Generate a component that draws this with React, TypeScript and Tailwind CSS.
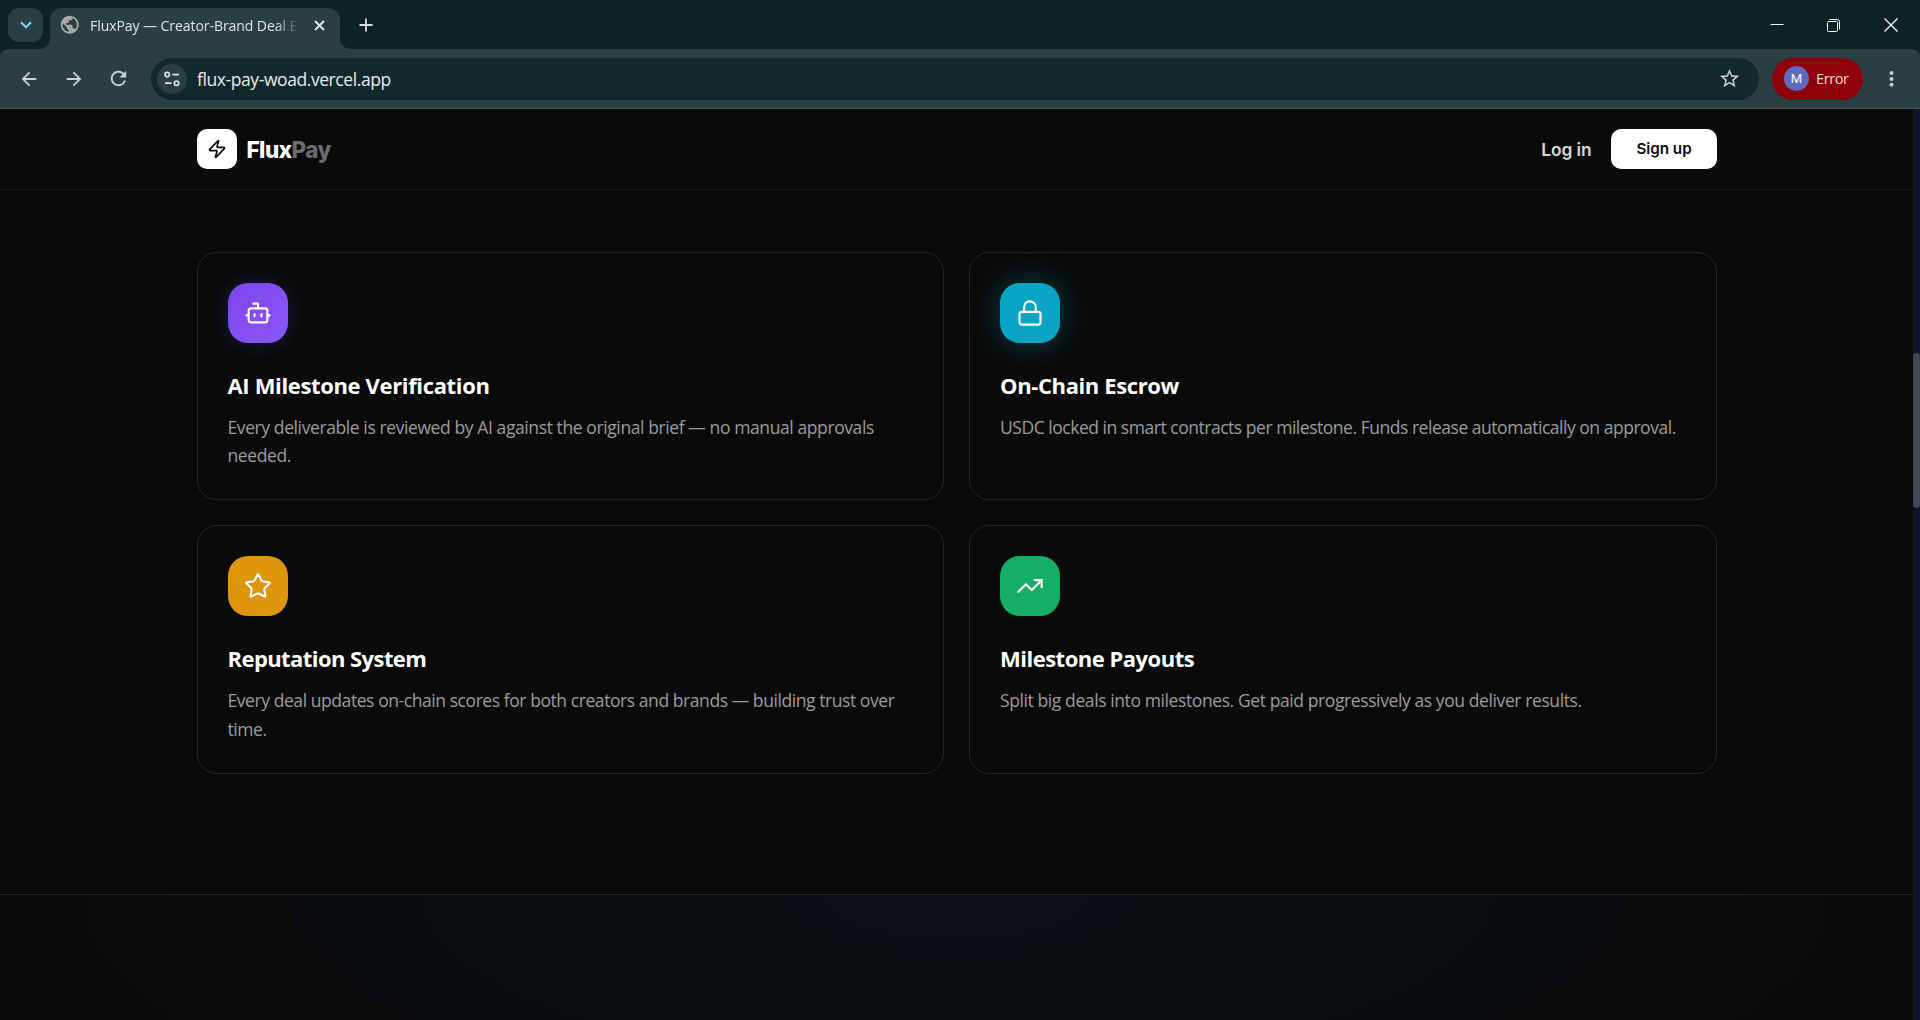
import React from "react";
import { Bot, Lock, Star, TrendingUp, Zap } from "lucide-react";
import type { LucideIcon } from "lucide-react";
import { MdArrowBack, MdArrowForward, MdPublic, MdRefresh, MdStarBorder } from "react-icons/md";

type Feature = {
  icon: LucideIcon;
  title: string;
  text: string;
  tile: string;
  titleTracking: string;
  textTracking: string;
};

const features: Feature[] = [
  {
    icon: Bot,
    title: "AI Milestone Verification",
    text: "Every deliverable is reviewed by AI against the original brief — no manual approvals needed.",
    tile: "bg-linear-to-br from-[#7f42ec] to-[#8b57f6] shadow-[0_0_20px_rgba(37,72,160,0.35)]",
    titleTracking: "tracking-[-0.35px]",
    textTracking: "tracking-[-0.4px]",
  },
  {
    icon: Lock,
    title: "On-Chain Escrow",
    text: "USDC locked in smart contracts per milestone. Funds release automatically on approval.",
    tile: "bg-[#08a4c4] shadow-[0_0_32px_rgba(6,182,212,0.32)]",
    titleTracking: "tracking-[-0.38px]",
    textTracking: "tracking-[-0.47px]",
  },
  {
    icon: Star,
    title: "Reputation System",
    text: "Every deal updates on-chain scores for both creators and brands — building trust over time.",
    tile: "bg-[#de940b]",
    titleTracking: "tracking-[-0.57px]",
    textTracking: "tracking-[-0.43px]",
  },
  {
    icon: TrendingUp,
    title: "Milestone Payouts",
    text: "Split big deals into milestones. Get paid progressively as you deliver results.",
    tile: "bg-[#16ad65]",
    titleTracking: "tracking-[-0.5px]",
    textTracking: "tracking-[-0.4px]",
  },
];

const TabStrip: React.FC = () => (
  <div className="flex h-[49px] items-start bg-[#0b2327] pl-2">
    <button className="mt-2 flex h-[34px] w-[35px] items-center justify-center rounded-[11px] bg-[#293f43]">
      <svg width="12" height="8" viewBox="0 0 12 8" fill="none" stroke="#7fd0ee" strokeWidth="2.2">
        <path d="M1 1.2l5 5 5-5" />
      </svg>
    </button>
    <div className="mt-[39px] ml-[-3px] h-[10px] w-[10px] bg-[#293f43]">
      <div className="h-full w-full rounded-br-[10px] bg-[#0b2327]" />
    </div>
    <div className="mt-2 flex h-[41px] w-[290px] items-center rounded-t-[12px] bg-[#293f43] pr-[14px] pb-[7px] pl-[9px]">
      <MdPublic className="size-[21.5px] shrink-0 text-[#a8a8a8]" />
      <span className="ml-[9.5px] w-[210px] text-[14px] tracking-[-0.06px] whitespace-nowrap text-[#e3e3e3] mask-r-from-88% mask-r-to-100%">
        FluxPay — Creator-Brand Deal E
      </span>
      <svg className="ml-[14px] shrink-0" width="11" height="11" viewBox="0 0 11 11" stroke="#e8e8e8" strokeWidth="1.9">
        <path d="M1 1l9 9M10 1l-9 9" />
      </svg>
    </div>
    <div className="mt-[39px] h-[10px] w-[10px] bg-[#293f43]">
      <div className="h-full w-full rounded-bl-[10px] bg-[#0b2327]" />
    </div>
    <svg className="mt-[18px] ml-[9px]" width="14" height="14" viewBox="0 0 14 14" stroke="#dedede" strokeWidth="1.8">
      <path d="M7 .5v13M.5 7h13" />
    </svg>
    <div className="ml-auto flex items-center gap-[43px] pt-[18px] pr-[22px]">
      <svg width="14" height="13" viewBox="0 0 14 13" stroke="#fff">
        <path d="M.5 5.5h13" />
      </svg>
      <svg width="13" height="13" viewBox="0 0 13 13" fill="none" stroke="#fff">
        <rect x=".5" y="2.5" width="10" height="10" rx="1" />
        <path d="M2.5.5h8a2 2 0 0 1 2 2v8" />
      </svg>
      <svg className="ml-px" width="14" height="14" viewBox="0 0 14 14" stroke="#fff" strokeWidth="1.2">
        <path d="M.5.5l13 13M13.5.5l-13 13" />
      </svg>
    </div>
  </div>
);

const Toolbar: React.FC = () => (
  <div className="bg-[#0b2327]">
    <div className="flex h-[60px] items-center rounded-t-[8px] border-b border-[#4b4f50] bg-[#293f43] pl-[17.5px]">
      <MdArrowBack className="size-[22px] text-[#cfcfcf]" />
      <MdArrowForward className="ml-[23px] size-[22px] text-[#cfcfcf]" />
      <MdRefresh className="ml-[22.5px] size-[23px] text-[#cfcfcf]" />
      <div className="ml-[21px] flex h-[42px] w-[1608px] items-center rounded-full bg-[#11292d] pr-[18px] pl-[6px]">
        <div className="flex size-[30px] items-center justify-center rounded-full bg-[#293f43]">
          <svg width="16" height="16" viewBox="0 0 16 16" fill="none" stroke="#e3e3e3" strokeWidth="1.7">
            <circle cx="3.2" cy="3.6" r="2.2" />
            <path d="M8.3 3.6h6.7M1 12.2h6.5" />
            <circle cx="12.6" cy="12.2" r="2.2" />
          </svg>
        </div>
        <span className="ml-[10px] pt-[2px] text-[17.5px] tracking-[-0.42px] text-[#e6e9ea]">flux-pay-woad.vercel.app</span>
        <MdStarBorder className="ml-auto size-[23px] text-[#cfcfcf]" />
      </div>
      <div className="ml-[13px] flex h-[42px] w-[91px] items-center rounded-full bg-[#90000a] pl-3">
        <span className="flex size-[25px] items-center justify-center rounded-full bg-[#5c6bc0] font-['Roboto',sans-serif] text-[13px] text-white">
          M
        </span>
        <span className="ml-[7px] text-[14.5px] tracking-[-0.4px] text-[#f3dcd6]">Error</span>
      </div>
      <svg className="ml-[26px]" width="5" height="16" viewBox="0 0 5 16" fill="#cfcfcf">
        <circle cx="2.5" cy="2.1" r="2" />
        <circle cx="2.5" cy="7.9" r="2" />
        <circle cx="2.5" cy="13.7" r="2" />
      </svg>
    </div>
  </div>
);

const Navbar: React.FC = () => (
  <header className="border-b border-[#19191a] bg-[#0a0a0a] font-['Inter',sans-serif]">
    <div className="mx-auto flex h-20 w-[1520px] items-center">
      <div className="flex size-10 items-center justify-center rounded-[10px] bg-white">
        <Zap className="size-5 text-[#0a0a0a]" />
      </div>
      <span className="ml-[10px] pt-[2px] text-[22.4px] font-extrabold tracking-[-0.5px] text-white">
        Flux<span className="text-[#6b6b6d]">Pay</span>
      </span>
      <span className="ml-auto pt-[2px] text-[17.4px] font-semibold tracking-[-0.1px] text-[#d6d9d9]">Log in</span>
      <button className="ml-[19px] h-10 w-[106px] rounded-[10px] bg-white pl-px text-[15.2px] font-semibold text-[#0a0a0a]">
        Sign up
      </button>
    </div>
  </header>
);

const FeatureCard: React.FC<{ feature: Feature }> = ({ feature }) => {
  const Icon = feature.icon;

  return (
    <div className="h-[248.4px] rounded-[20px] border border-[#262626] p-[30px]">
      <div className={`flex size-[60px] items-center justify-center rounded-[20px] ${feature.tile}`}>
        <Icon className="size-7 text-white" strokeWidth={1.8} />
      </div>
      <h3 className={`mt-[26px] text-[22px] leading-8 font-bold text-white ${feature.titleTracking}`}>
        {feature.title}
      </h3>
      <p className={`mt-3 text-[17.5px] leading-[28.4px] text-[#9c9c9c] ${feature.textTracking}`}>
        {feature.text}
      </p>
    </div>
  );
};

const App: React.FC = () => {
  return (
    <div className="flex h-[1020px] w-[1920px] flex-col overflow-hidden bg-[#0a0a0a] font-['Open_Sans','Noto_Sans',sans-serif]">
      <TabStrip />
      <Toolbar />
      <div className="flex min-h-0 flex-1">
        <div className="flex w-[1913px] flex-col">
          <Navbar />
          <main className="mx-auto grid w-[1520px] grid-cols-2 gap-[25px] pt-[62px] pb-[120px]">
            {features.map((feature) => (
              <FeatureCard key={feature.title} feature={feature} />
            ))}
          </main>
          <section className="flex-1 border-t border-[#262628] bg-[radial-gradient(ellipse_940px_300px_at_50%_0%,#0c1118_0%,#0b0f13_45%,#0a0a0a_100%)]" />
        </div>
        <div className="w-[7px] bg-[#0f172a] pt-[244px]">
          <div className="h-[155px] rounded-full bg-[#3a4a56]" />
        </div>
      </div>
    </div>
  );
};

export default App;
